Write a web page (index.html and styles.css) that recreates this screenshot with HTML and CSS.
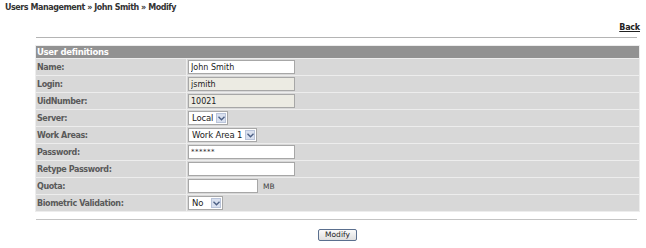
FILE: index.html
```html
<!DOCTYPE html>
<html lang="en">
<head>
  <meta charset="UTF-8" />
  <title>Users Management - Modify</title>
  <link rel="stylesheet" href="styles.css">
</head>
<body>
  <div class="crumbs">Users Management &raquo; John Smith &raquo; Modify</div>

  <div class="content">
    <div class="back-bar"><a href="#" class="back">Back</a></div>
    <div class="rule"></div>

    <table class="form">
      <tr><th colspan="2">User definitions</th></tr>
      <tr>
        <td class="label">Name:</td>
        <td><input type="text" class="field" value="John Smith"></td>
      </tr>
      <tr>
        <td class="label">Login:</td>
        <td><input type="text" class="field readonly" value="jsmith" readonly></td>
      </tr>
      <tr>
        <td class="label">UidNumber:</td>
        <td><input type="text" class="field readonly" value="10021" readonly></td>
      </tr>
      <tr>
        <td class="label">Server:</td>
        <td><span class="select">Local<span class="arrow"><svg width="7" height="5" viewBox="0 0 7 5"><path d="M0.5 0.8 L3.5 3.8 L6.5 0.8" fill="none" stroke="#4d6185" stroke-width="1.4"/></svg></span></span></td>
      </tr>
      <tr>
        <td class="label">Work Areas:</td>
        <td><span class="select">Work Area 1<span class="arrow"><svg width="7" height="5" viewBox="0 0 7 5"><path d="M0.5 0.8 L3.5 3.8 L6.5 0.8" fill="none" stroke="#4d6185" stroke-width="1.4"/></svg></span></span></td>
      </tr>
      <tr>
        <td class="label">Password:</td>
        <td><input type="text" class="field pass" value="******"></td>
      </tr>
      <tr>
        <td class="label">Retype Password:</td>
        <td><input type="text" class="field" value=""></td>
      </tr>
      <tr>
        <td class="label">Quota:</td>
        <td><input type="text" class="field short" value=""><span class="unit">MB</span></td>
      </tr>
      <tr>
        <td class="label">Biometric Validation:</td>
        <td><span class="select narrow">No<span class="arrow"><svg width="7" height="5" viewBox="0 0 7 5"><path d="M0.5 0.8 L3.5 3.8 L6.5 0.8" fill="none" stroke="#4d6185" stroke-width="1.4"/></svg></span></span></td>
      </tr>
    </table>

    <div class="rule bottom"></div>
    <div class="actions"><button class="btn">Modify</button></div>
  </div>
</body>
</html>
```

FILE: styles.css
```css
body {
  margin: 0;
  background: #ffffff;
  color: #333333;
  font-family: "DejaVu Sans", Verdana, sans-serif;
  font-size: 9px;
}

.crumbs {
  padding: 3px 0 0 5px;
  height: 11px;
  font-weight: bold;
  font-size: 8px;
  letter-spacing: -0.45px;
  color: #333;
}

.content {
  margin-left: 35px;
  width: 605px;
}

.back-bar {
  text-align: right;
  padding-top: 8px;
  height: 14px;
}

.back {
  color: #222;
  font-weight: bold;
  font-size: 8px;
  letter-spacing: -0.2px;
}

.rule {
  height: 1px;
  background: #b4b4b4;
  margin: 1px 3px 0 1px;
}

.form {
  width: 605px;
  border-collapse: separate;
  border-spacing: 1px;
  margin-top: 7px;
  background: #ededed;
}

.form th {
  background: #929292;
  color: #ffffff;
  text-align: left;
  font-size: 8.5px;
  letter-spacing: -0.3px;
  height: 12px;
  padding: 0 0 0 1px;
  line-height: 12px;
}

.form td {
  background: #d8d8d8;
  height: 16px;
  padding: 0;
}

.form td.label {
  width: 149px;
  color: #5a5a5a;
  font-weight: bold;
  font-size: 8px;
  letter-spacing: -0.4px;
  padding-left: 1px;
}

.field {
  box-sizing: border-box;
  width: 107px;
  height: 14px;
  margin: 0 0 0 1px;
  padding: 0 2px;
  border: 1px solid #a7a7a7;
  background: #ffffff;
  font-family: "DejaVu Sans", Verdana, sans-serif;
  font-size: 8px;
  color: #222;
  vertical-align: middle;
}

.field.readonly {
  background: #ecebe3;
}

.field.pass {
  font-size: 7px;
  letter-spacing: 0.5px;
}

.field.short {
  width: 70px;
}

.unit {
  margin-left: 5px;
  font-size: 7.5px;
  color: #444;
  vertical-align: middle;
}

.select {
  display: inline-flex;
  align-items: center;
  box-sizing: border-box;
  height: 14px;
  margin-left: 1px;
  padding: 0 1px 0 3px;
  border: 1px solid #a7a7a7;
  background: #ffffff;
  font-size: 8.5px;
  letter-spacing: -0.15px;
  color: #222;
  vertical-align: middle;
}

.select .arrow {
  display: inline-flex;
  align-items: center;
  justify-content: center;
  width: 10px;
  height: 10px;
  margin-left: 3px;
  box-sizing: border-box;
  border: 1px solid #b9c4da;
  background: #d9e0ef;
}

.select.narrow .arrow {
  margin-left: 8px;
}

.rule.bottom {
  margin-top: 7px;
  background: #c4c4c4;
}

.actions {
  text-align: center;
  padding-top: 9px;
}

.btn {
  height: 12px;
  width: 39px;
  padding: 0;
  border: 1px solid #5a6f8e;
  border-radius: 2px;
  background: linear-gradient(#fafafa, #dedede);
  font-family: "DejaVu Sans", Verdana, sans-serif;
  font-size: 7.5px;
  color: #222;
  line-height: 10px;
}
```
